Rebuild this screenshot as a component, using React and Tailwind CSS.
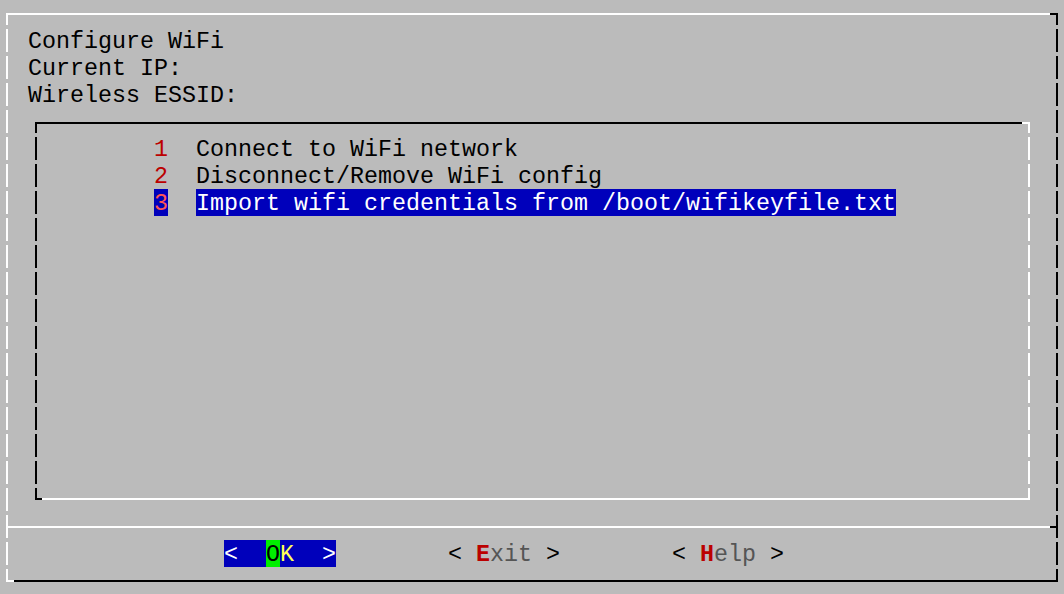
import React from "react";

const FONT = { fontFamily: '"Liberation Mono", "DejaVu Sans Mono", monospace' };

const CELL = "h-[27px] pt-[4px] leading-[23px] whitespace-pre";

function Row({ children }) {
  return <div className={CELL}>{children}</div>;
}

function MenuItem({ num, label, selected }) {
  return (
    <div className="h-[27px] flex">
      <span
        className={
          CELL + " w-[14px] " + (selected ? "bg-[#0000bb] text-[#ff5555]" : "text-[#bb0000]")
        }
      >
        {num}
      </span>
      <span className="w-[28px]" />
      <span className={CELL + " " + (selected ? "bg-[#0000bb] text-white" : "text-black")}>{label}</span>
    </div>
  );
}

export default function App() {
  return (
    <div
      className="w-[1064px] h-[594px] bg-[#bbbbbb] pt-[13px] pl-[6px] overflow-hidden text-[23.33px] text-black"
      style={FONT}
    >
      {/* outer box */}
      <div className="w-[1052px] h-[569px] flex flex-col">
        <div className="h-[2px] flex">
          <div className="flex-1 bg-white" />
          <div className="w-[8px] bg-black" />
        </div>
        <div className="h-[565px] flex">
          <div className="w-[2px] bg-[repeating-linear-gradient(to_bottom,#ffffff_0_10px,transparent_10px_14px,#ffffff_14px_27px)]" />
          <div className="w-[1048px] flex flex-col">
            <div className="pt-[12px] pl-[20px]">
              <Row>Configure WiFi</Row>
              <Row>Current IP:</Row>
              <Row>Wireless ESSID:</Row>
            </div>
            {/* inner box */}
            <div className="mt-[14px] ml-[27px] w-[995px] h-[378px] flex flex-col">
              <div className="h-[2px] flex">
                <div className="flex-1 bg-black" />
                <div className="w-[8px] bg-white" />
              </div>
              <div className="flex-1 flex">
                <div className="w-[2px] bg-[repeating-linear-gradient(to_bottom,#000000_0_9px,transparent_9px_13px,#000000_13px_27px)]" />
                <div className="flex-1 pt-[11px] pl-[117px]">
                  <MenuItem num="1" label="Connect to WiFi network" />
                  <MenuItem num="2" label="Disconnect/Remove WiFi config" />
                  <MenuItem num="3" label="Import wifi credentials from /boot/wifikeyfile.txt" selected />
                </div>
                <div className="w-[2px] bg-[repeating-linear-gradient(to_bottom,#ffffff_0_9px,transparent_9px_13px,#ffffff_13px_27px)]" />
              </div>
              <div className="h-[2px] flex">
                <div className="w-[7px] bg-black" />
                <div className="flex-1 bg-white" />
              </div>
            </div>
            {/* separator */}
            <div className="mt-[26px] h-[2px] flex">
              <div className="flex-1 bg-white" />
              <div className="w-[6px] bg-black" />
            </div>
            {/* buttons */}
            <div className="mt-[12px] h-[27px] flex pl-[216px] gap-[112px]">
              <div className="w-[112px] bg-[#0000bb] flex">
                <span className={CELL + " text-white"}>{"<  "}</span>
                <span className={CELL + " bg-[#00ee00] text-black"}>O</span>
                <span className={CELL + " text-[#ffff55]"}>K</span>
                <span className={CELL + " text-white"}>{"  >"}</span>
              </div>
              <div className="w-[112px] flex">
                <span className={CELL + " text-black"}>{"< "}</span>
                <span className={CELL + " text-[#bb0000] font-bold"}>E</span>
                <span className={CELL + " text-[#555555]"}>xit</span>
                <span className={CELL + " text-black"}>{" >"}</span>
              </div>
              <div className="w-[112px] flex">
                <span className={CELL + " text-black"}>{"< "}</span>
                <span className={CELL + " text-[#bb0000] font-bold"}>H</span>
                <span className={CELL + " text-[#555555]"}>elp</span>
                <span className={CELL + " text-black"}>{" >"}</span>
              </div>
            </div>
          </div>
          <div className="w-[2px] bg-[repeating-linear-gradient(to_bottom,#000000_0_10px,transparent_10px_14px,#000000_14px_27px)]" />
        </div>
        <div className="h-[2px] flex">
          <div className="w-[8px] bg-white" />
          <div className="flex-1 bg-black" />
        </div>
      </div>
    </div>
  );
}
